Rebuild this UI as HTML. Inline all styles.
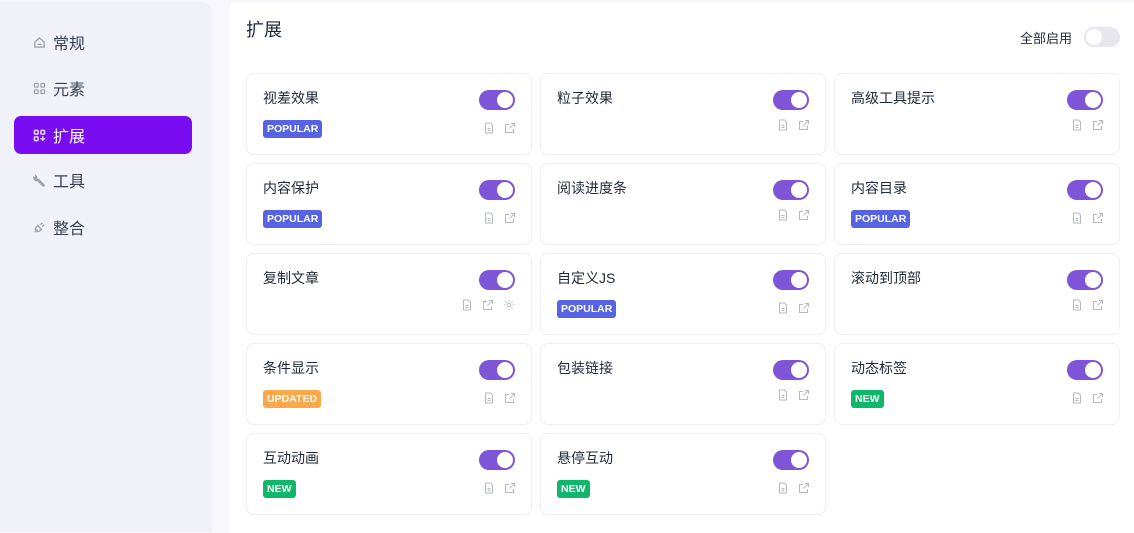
<!DOCTYPE html><html><head><meta charset="utf-8"><style>
*{box-sizing:border-box;margin:0;padding:0}
body{width:1134px;height:527px;overflow:hidden;background:#f8f8fc;font-family:"Liberation Sans","Noto Sans CJK SC",sans-serif;color:#1f2937;position:relative}
.side{position:absolute;left:0;top:2px;width:212px;height:530px;background:#f1f1f9;border-radius:0 10px 0 0}
.nav{position:absolute;left:14px;width:178px;height:38px;border-radius:7px;display:flex;align-items:center;padding-left:19px;font-size:16px;color:#374151}
.nav svg{margin-right:7px}
.nav.act{background:#7a0cf2;color:#fff}
.main{position:absolute;left:230px;top:3px;width:904px;height:530px;background:#fff}
h1{position:absolute;left:246px;top:16px;font-size:18px;font-weight:normal;color:#1f2937}
.all{position:absolute;left:1020px;top:28px;font-size:13px;color:#1f2937}
.tg{position:absolute;width:36px;height:20px;border-radius:10px;background:#7e55d6}
.tg::after{content:"";position:absolute;right:2px;top:2px;width:16px;height:16px;border-radius:50%;background:#fff}
.tg.off{background:#e6e6ec}.tg.off::after{left:2px;right:auto}
.card{position:absolute;width:286px;height:82px;border:1px solid #eceef2;border-radius:8px;background:#fff}
.card .t{position:absolute;left:16px;top:14px;font-size:14px;color:#1f2937}
.card .tg{left:232px;top:16px}
.b{position:absolute;left:16px;top:46px;height:18px;line-height:18px;padding:0 4px;border-radius:3px;color:#fff;font-size:10.5px;font-weight:bold}
.pop{background:#5664e4}.upd{background:#fba84a}.new{background:#10b76a}
.ic{position:absolute;top:47px;display:flex;gap:9px}
</style></head><body>
<div class="side">
<div class="nav" style="top:21px"><svg width="13" height="13" viewBox="0 0 14 14" fill="none" stroke="#9ca3af" stroke-width="1.4"><path d="M2 6.5L7 2l5 4.5V12H2z"/><path d="M5 9h4"/></svg>常规</div>
<div class="nav" style="top:67px"><svg width="13" height="13" viewBox="0 0 14 14" fill="none" stroke="#9ca3af" stroke-width="1.4"><rect x="1.5" y="1.5" width="4" height="4" rx="1"/><rect x="8.5" y="1.5" width="4" height="4" rx="1"/><rect x="1.5" y="8.5" width="4" height="4" rx="1"/><rect x="8.5" y="8.5" width="4" height="4" rx="1"/></svg>元素</div>
<div class="nav act" style="top:114px"><svg width="13" height="13" viewBox="0 0 14 14" fill="none" stroke="#e9d5ff" stroke-width="1.6"><rect x="1.5" y="1.5" width="4" height="4" rx="1"/><rect x="8.5" y="1.5" width="4" height="4" rx="1"/><rect x="1.5" y="8.5" width="4" height="4" rx="1"/><path d="M10.5 8v5M8 10.5h5"/></svg>扩展</div>
<div class="nav" style="top:159px"><svg width="13" height="13" viewBox="0 0 14 14" fill="none" stroke="#9ca3af" stroke-width="1.6"><path d="M3 2a3 3 0 0 0 3 4l6 6-1 1-6-6a3 3 0 0 1-4-3l2 1 1-1z"/></svg>工具</div>
<div class="nav" style="top:206px"><svg width="13" height="13" viewBox="0 0 14 14" fill="none" stroke="#9ca3af" stroke-width="1.5"><path d="M2 12l3-3M5 5l4 4-2 2a3 3 0 0 1-4-4zM8 4l2-2M10 6l2-2"/></svg>整合</div>
</div>
<div class="main"></div>
<h1>扩展</h1>
<div class="all">全部启用</div>
<div class="tg off" style="left:1084px;top:27px;width:36px"></div>
<div id="g"></div>
<script>
var d=[["视差效果","pop"],["粒子效果",""],["高级工具提示",""],["内容保护","pop"],["阅读进度条",""],["内容目录","pop"],["复制文章","",1],["自定义JS","pop"],["滚动到顶部",""],["条件显示","upd"],["包装链接",""],["动态标签","new"],["互动动画","new"],["悬停互动","new"]];
var doc='<svg width="12" height="12" viewBox="0 0 12 12" fill="none" stroke="#b5b9c2" stroke-width="1"><path d="M2.5 1h5l2 2v8h-7z"/><path d="M4.5 6.5h3M4.5 8.5h3"/></svg>';
var ext='<svg width="12" height="12" viewBox="0 0 12 12" fill="none" stroke="#b5b9c2" stroke-width="1"><path d="M9.5 7v3.5h-8v-8H5"/><path d="M7 1.5h3.5V5M10.5 1.5L5.5 6.5"/></svg>';
var gear='<svg width="12" height="12" viewBox="0 0 12 12" fill="none" stroke="#b5b9c2" stroke-width="1"><circle cx="6" cy="6" r="1.8"/><path d="M6 1v1.5M6 9.5V11M1 6h1.5M9.5 6H11M2.5 2.5l1 1M8.5 8.5l1 1M2.5 9.5l1-1M8.5 3.5l1-1"/></svg>';
var h='',L={pop:"POPULAR",upd:"UPDATED",new:"NEW"};
d.forEach(function(c,i){var x=246+(i%3)*294,y=73+Math.floor(i/3)*90;
h+='<div class="card" style="left:'+x+'px;top:'+y+'px"><div class="t">'+c[0]+'</div><div class="tg"></div>'+(c[1]?'<div class="b '+c[1]+'">'+L[c[1]]+'</div>':'')+'<div class="ic" style="left:'+(c[2]?214:236)+'px;top:'+(c[1]?48:45)+'px">'+doc+ext+(c[2]?gear:'')+'</div></div>';});
document.getElementById('g').innerHTML=h;
</script>
</body></html>
